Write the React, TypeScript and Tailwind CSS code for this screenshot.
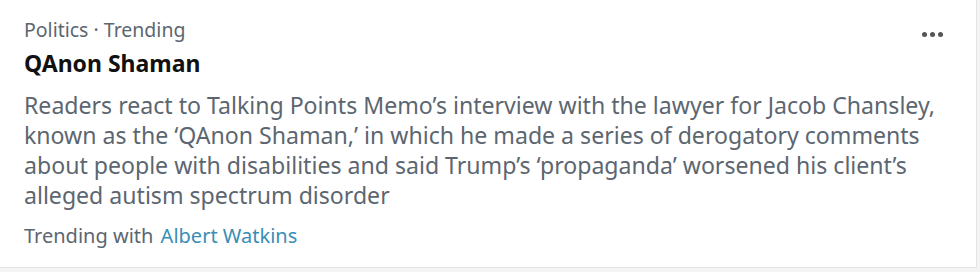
import React from "react";

const App: React.FC = () => {
  return (
    <div className="w-[980px] h-[272px] bg-[#f4f4f4] font-['Noto_Sans',sans-serif]">
      <div className="w-[977px] h-[268px] bg-white border-r border-b border-[#e3e3e3] relative">
        <div className="pl-[24px] pt-[17px] text-[#5c6670]">
          <div className="text-[19.5px] leading-[26px]">Politics · Trending</div>
          <div className="mt-[4px] text-[23px] leading-[32px] font-bold text-[#111]">QAnon Shaman</div>
          <p className="mt-[11px] text-[23.1px] leading-[30px] whitespace-nowrap">
            Readers react to Talking Points Memo’s interview with the lawyer for Jacob Chansley,
            <br />
            known as the ‘QAnon Shaman,’ in which he made a series of derogatory comments
            <br />
            about people with disabilities and said Trump’s ‘propaganda’ worsened his client’s
            <br />
            alleged autism spectrum disorder
          </p>
          <div className="mt-[11px] text-[20px] leading-[30px]">
            Trending with <span className="text-[#3a8db5] ml-[2px]">Albert Watkins</span>
          </div>
        </div>
        <div className="absolute left-[922px] top-[32px] flex gap-[3px]">
          <span className="w-[5px] h-[5px] rounded-full bg-[#555]" />
          <span className="w-[5px] h-[5px] rounded-full bg-[#555]" />
          <span className="w-[5px] h-[5px] rounded-full bg-[#555]" />
        </div>
      </div>
    </div>
  );
};

export default App;
